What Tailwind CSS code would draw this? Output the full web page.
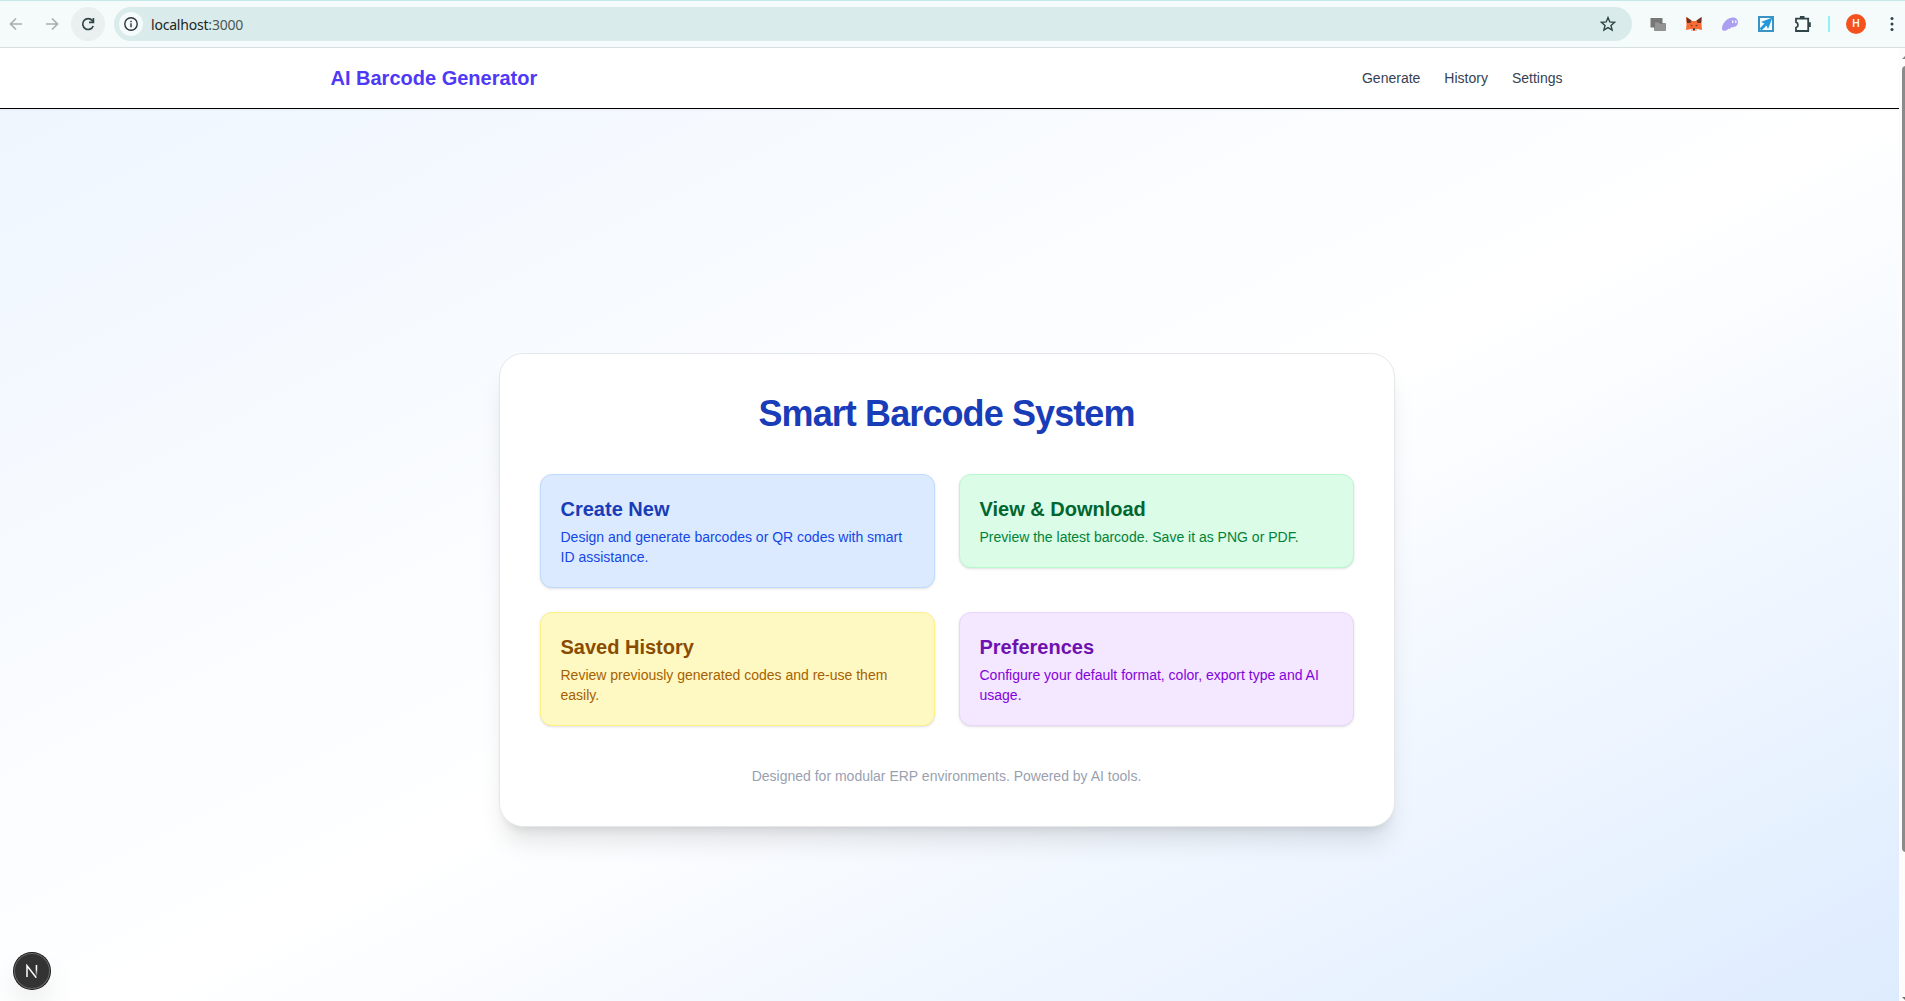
<!DOCTYPE html>
<html lang="en">
<head>
<meta charset="utf-8">
<title>AI Barcode Generator</title>
<script src="https://cdn.jsdelivr.net/npm/@tailwindcss/browser@4"></script>
</head>
<body class="relative h-[1001px] overflow-hidden bg-white font-['Liberation_Sans',Arial,sans-serif]">
<!-- Browser toolbar -->
<div class="relative flex h-12 items-center border-t border-b border-t-[#c5e8e8] border-b-[#d6e0df] bg-[#f4fbfa]">
  <svg class="ml-[6px] size-5 shrink-0" viewBox="0 0 20 20" fill="none" stroke="#a9b0af" stroke-width="1.7"><path d="M16 10H5M10 4.500L4.500 10L10 15.500"/></svg>
  <svg class="ml-4 size-5 shrink-0" viewBox="0 0 20 20" fill="none" stroke="#a9b0af" stroke-width="1.700"><path d="M4 10H15M10 4.500L15.500 10L10 15.500"/></svg>
  <div class="ml-[9px] flex size-[34px] shrink-0 items-center justify-center rounded-full bg-[#eaf0ef]">
    <svg class="size-4" viewBox="0 0 16 16" fill="none" stroke="#2f4446" stroke-width="1.700"><path d="M13.200 10A5.400 5.400 0 1 1 12.300 4.600L13.300 5.700"/><path d="M13.400 2V6.400H9"/></svg>
  </div>
  <div class="ml-[9px] flex h-[34px] w-[1518px] shrink-0 items-center rounded-full bg-[#d9ebea] pl-[5px] pr-[15px]">
    <div class="flex size-6 items-center justify-center rounded-full bg-[#f4fbfa]">
      <svg class="size-4" viewBox="0 0 16 16" fill="none" stroke="#2b3434" stroke-width="1.400"><circle cx="8" cy="8" r="6.200"/><path d="M8 7.300V11.200M8 4.700V6.200"/></svg>
    </div>
    <span class="ml-2 font-['Noto_Sans',sans-serif] text-[14px] tracking-[-0.2px] text-[#1b2525]">localhost<span class="text-[#4b5858]">:3000</span></span>
    <svg class="ml-auto size-[18px]" viewBox="0 0 18 18" fill="none" stroke="#2f4446" stroke-width="1.400"><path d="M9 2.500L10.800 6.900L15.600 7.300L12 10.500L13.100 15.100L9 12.600L4.900 15.100L6 10.500L2.400 7.300L7.200 6.900Z"/></svg>
  </div>
  <svg class="ml-[18px] size-4 shrink-0" viewBox="0 0 16 16"><path d="M0.500 2H12.500V11.500H0.500Z" fill="#777"/><path d="M4.500 6H9L10 7.500H15.500V14.500H4.500Z" fill="#949494" stroke="#6d6d6d" stroke-width=".6"/></svg>
  <svg class="ml-5 size-4 shrink-0" viewBox="0 0 16 16"><path d="M0 1L6 5H10L16 1L15.500 8L16 14L11 13L9 15H7L5 13L0 14L.5 8Z" fill="#fa6a33"/><path d="M0.500 1L5.500 4.500L4.500 7L1 7ZM15.500 1L10.500 4.500L11.500 7L15 7Z" fill="#6b3320"/><path d="M4 8.500L6.500 9.500L6 10.500ZM12 8.500L9.500 9.500L10 10.500ZM7 12.500H9V14H7Z" fill="#233447"/><path d="M5 13H7V15H5ZM9 13H11V15H9Z" fill="#d9c9c0"/></svg>
  <svg class="ml-5 size-4 shrink-0" viewBox="0 0 16 16"><path d="M0 12.500C0 8 4.500 2 10.500 1.500C14 1.200 16 3.500 16 6C16 9 14 11 12 10.800C11 12 10 11.500 9.500 11C8.500 13 7.500 13 6.500 12.500C5 15 0 16 0 12.500Z" fill="#ab9ff2"/><path d="M10.800 5V6.600M13.800 5V6.600" stroke="#fff" stroke-width="1.300" stroke-linecap="round"/></svg>
  <svg class="ml-5 size-4 shrink-0" viewBox="0 0 16 16"><rect x="1" y="1" width="14" height="14" fill="#f7feff" stroke="#3b93c4" stroke-width="2"/><path d="M14.500 1.500L3 6L6.500 7.500L1.500 12.500L3.500 14.500L8.500 9.500L10 13Z" fill="#2297dc"/></svg>
  <svg class="ml-5 size-[18px] shrink-0" viewBox="0 0 18 18" fill="none" stroke="#2f4446" stroke-width="1.800"><path d="M2 3.600H14.200V16H2V12.700C4.600 12 4.600 7.800 2 7.100Z"/><path d="M6.800 3.500V2H9.600V3.500M14.200 8.200H15.900V11H14.200"/></svg>
  <div class="ml-4 h-4 w-[2px] shrink-0 bg-[#91f1f5]"></div>
  <div class="ml-4 flex size-5 shrink-0 items-center justify-center rounded-full bg-[#f4511e] font-[Roboto,sans-serif] text-[10.5px] font-medium text-white">H</div>
  <svg class="ml-[18px] h-4 w-4 shrink-0" viewBox="0 0 16 16" fill="#2f4446"><circle cx="8" cy="2.500" r="1.500"/><circle cx="8" cy="8" r="1.500"/><circle cx="8" cy="13.500" r="1.500"/></svg>
</div>

<!-- Page viewport and scrollbar -->
<div class="flex h-[953px]">
  <div class="w-[1899px] shrink-0 overflow-hidden">
    <div class="-ml-1.5 w-[1905px]">
      <nav class="relative h-[61px] border-b border-black bg-white shadow-xs">
        <div class="mx-auto flex max-w-7xl items-center justify-between px-6 py-4">
          <span class="text-xl font-bold text-indigo-600">AI Barcode Generator</span>
          <div class="flex gap-6 text-sm text-gray-700"><span>Generate</span><span>History</span><span>Settings</span></div>
        </div>
      </nav>
      <main class="flex h-[962px] items-center justify-center bg-gradient-to-br from-blue-50 via-white to-blue-100">
        <section class="w-full max-w-4xl rounded-3xl border border-gray-200 bg-white p-10 shadow-xl">
          <h1 class="mb-10 text-center text-4xl font-extrabold tracking-tight text-blue-800">Smart Barcode System</h1>
          <div class="grid grid-cols-2 items-start gap-6">
            <div class="rounded-xl border border-blue-200 bg-blue-100 p-5 shadow-sm">
              <h2 class="mb-1 text-xl font-semibold text-blue-800">Create New</h2>
              <p class="text-sm text-blue-700">Design and generate barcodes or QR codes with smart ID assistance.</p>
            </div>
            <div class="rounded-xl border border-green-200 bg-green-100 p-5 shadow-sm">
              <h2 class="mb-1 text-xl font-semibold text-green-800">View &amp; Download</h2>
              <p class="text-sm text-green-700">Preview the latest barcode. Save it as PNG or PDF.</p>
            </div>
            <div class="rounded-xl border border-yellow-200 bg-yellow-100 p-5 shadow-sm">
              <h2 class="mb-1 text-xl font-semibold text-yellow-800">Saved History</h2>
              <p class="text-sm text-yellow-700">Review previously generated codes and re-use them easily.</p>
            </div>
            <div class="rounded-xl border border-purple-200 bg-purple-100 p-5 shadow-sm">
              <h2 class="mb-1 text-xl font-semibold text-purple-800">Preferences</h2>
              <p class="text-sm text-purple-700">Configure your default format, color, export type and AI usage.</p>
            </div>
          </div>
          <p class="mt-10 text-center text-sm text-gray-400">Designed for modular ERP environments. Powered by AI tools.</p>
        </section>
      </main>
    </div>
  </div>
  <div class="flex w-1.5 shrink-0 flex-col overflow-hidden bg-[#fcfcfc] pl-[3px]">
    <svg class="mt-2 h-[3px] w-[3px]" viewBox="0 0 3 3"><path d="M0 3L3 0V3Z" fill="#858585"/></svg>
    <div class="mt-[7px] h-[786px] w-2 rounded-l bg-[#8b8b8b]"></div>
    <svg class="mt-auto mb-px h-[3px] w-[3px]" viewBox="0 0 3 3"><path d="M0 0H3V3Z" fill="#707070"/></svg>
  </div>
</div>

<!-- Floating framework badge -->
<div class="absolute top-[953px] left-[14px] flex size-9 items-center justify-center rounded-full bg-[#333] shadow-[0_0_0_1px_#171717,inset_0_0_0_1px_#666,0_16px_32px_-8px_rgba(0,0,0,0.24)]">
  <svg class="size-[14px]" viewBox="0 0 14 14" fill="none" stroke-width="1.500">
    <defs><linearGradient id="fade" x1="0" y1="0" x2="0" y2="1"><stop offset="0.400" stop-color="#fff"/><stop offset="1" stop-color="#fff" stop-opacity=".1"/></linearGradient></defs>
    <path d="M2 13V1.700L11.300 13.700" stroke="#fff"/><rect x="10.700" y="1" width="1.500" height="11" fill="url(#fade)"/>
  </svg>
</div>
</body>
</html>
